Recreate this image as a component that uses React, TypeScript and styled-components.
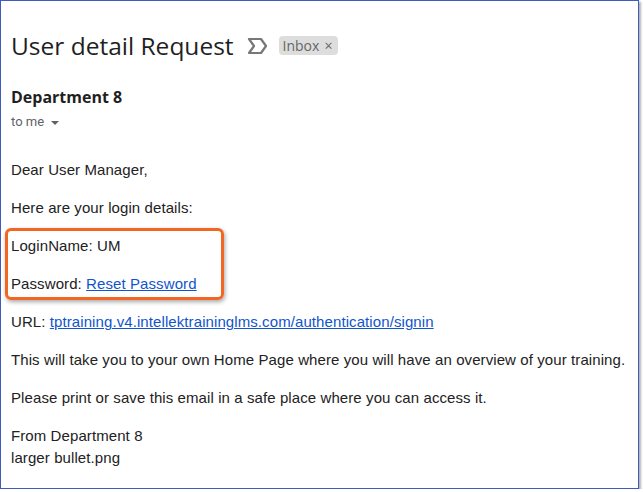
import styled, { createGlobalStyle } from "styled-components";

const GlobalStyle = createGlobalStyle`
    html, body {
        margin: 0;
        padding: 0;
        background: #ffffff;
    }
`;

// the mail view, with its thin blue frame
const Frame = styled.div`
    width: 627px;
    height: 487px;
    border: 1px solid #3f5bc0;
    box-shadow: 2px 2px 2px rgba(0, 0, 0, 0.3);
    background: #ffffff;
    padding: 0 0 0 10px;
    overflow: hidden;
`;

const Subject = styled.div`
    display: flex;
    align-items: center;
    height: 36px;
    margin-top: 26px;
`;

const Title = styled.h1`
    margin: 0 13px 0 0;
    font-family: "Open Sans", Roboto, sans-serif;
    font-weight: 400;
    font-size: 24.5px;
    color: #1f1f1f;
`;

const Marker = styled.svg`
    width: 22px;
    height: 18px;
    margin: 2px 10px 0 0;
`;

const Chip = styled.span`
    display: inline-flex;
    align-items: center;
    gap: 5px;
    height: 19px;
    padding: 0 6px 0 4px;
    border-radius: 4px;
    background: #dddddd;
    color: #666666;
    font-family: "Open Sans", Roboto, sans-serif;
    font-size: 14px;
`;

const Sender = styled.div`
    margin-top: 24px;
    font-family: "Open Sans", Roboto, sans-serif;
    font-weight: 700;
    font-size: 16px;
    color: #1f1f1f;
    line-height: 20px;
`;

const Recipient = styled.div`
    display: flex;
    align-items: center;
    gap: 7px;
    margin-top: 7px;
    font-family: Roboto, sans-serif;
    font-size: 13px;
    color: #5f6368;
    line-height: 16px;
`;

const Caret = styled.span`
    width: 0;
    height: 0;
    border-left: 4px solid transparent;
    border-right: 4px solid transparent;
    border-top: 4px solid #5f6368;
    margin-top: 1px;
`;

const Body = styled.div`
    margin-top: 29px;
    font-family: "Liberation Sans", Arial, sans-serif;
    font-size: 15px;
    letter-spacing: 0.09px;
    color: #222222;
    line-height: 22px;
`;

const Para = styled.p`
    margin: 0 0 16px 0;
`;

// orange annotation box drawn round the login lines
const Highlight = styled.div`
    width: 210px;
    margin: -7px 0 11px -6px;
    padding: 4px 0 2px 3px;
    border: 3px solid #f26522;
    border-radius: 6px;
    box-shadow: 1px 2px 4px rgba(0, 0, 0, 0.35);

    p:last-child {
        margin-bottom: 0;
    }
`;

const Link = styled.a`
    color: #1155cc;
    text-decoration: underline;
`;

function App() {
    return (
        <>
            <GlobalStyle />
            <Frame>
                <Subject>
                    <Title>User detail Request</Title>
                    <Marker viewBox="0 0 22 18">
                        <path
                            d="M2 2 H14 L19 9 L14 16 H2 L7 9 Z"
                            fill="none"
                            stroke="#777777"
                            strokeWidth="2.2"
                            strokeLinejoin="round"
                        />
                    </Marker>
                    <Chip>
                        Inbox <span>×</span>
                    </Chip>
                </Subject>
                <Sender>Department 8</Sender>
                <Recipient>
                    to me <Caret />
                </Recipient>
                <Body>
                    <Para>Dear User Manager,</Para>
                    <Para>Here are your login details:</Para>
                    <Highlight>
                        <Para>LoginName: UM</Para>
                        <Para>
                            Password: <Link href="#">Reset Password</Link>
                        </Para>
                    </Highlight>
                    <Para>
                        URL: <Link href="#">tptraining.v4.intellektraininglms.com/authentication/signin</Link>
                    </Para>
                    <Para>This will take you to your own Home Page where you will have an overview of your training.</Para>
                    <Para>Please print or save this email in a safe place where you can access it.</Para>
                    <Para>
                        From Department 8
                        <br />
                        larger bullet.png
                    </Para>
                </Body>
            </Frame>
        </>
    );
}

export default App;
